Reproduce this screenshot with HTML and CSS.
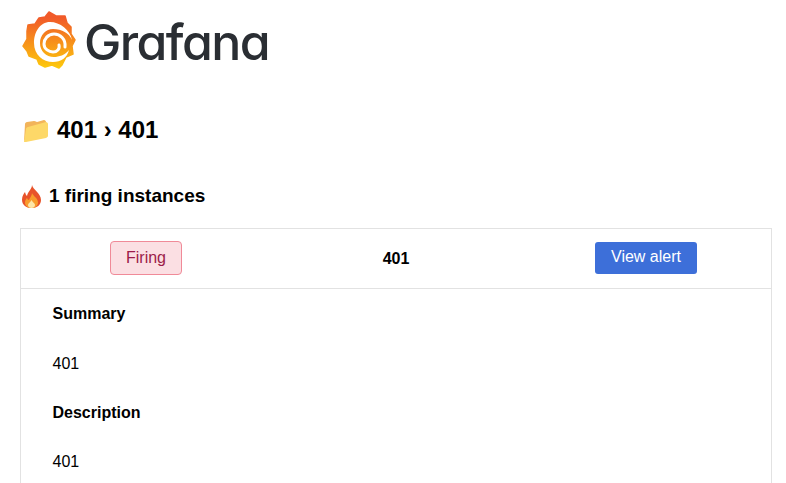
FILE: index.html
```html
<!DOCTYPE html>
<html lang="en">
<head>
<meta charset="utf-8">
<title>Grafana alert</title>
<link rel="stylesheet" href="styles.css">
</head>
<body>
<div class="page">
  <header class="brand">
    <svg class="brand-mark" viewBox="20 9 60 60" aria-hidden="true">
      <defs>
        <linearGradient id="gf" x1="0" y1="0" x2="0" y2="1">
          <stop offset="0.1" stop-color="#f15a29"/>
          <stop offset="1" stop-color="#fdc90c"/>
        </linearGradient>
      </defs>
      <path fill="url(#gf)" stroke="url(#gf)" stroke-width="1.5" stroke-linejoin="round" d="M49 11 L56 15 L65 15 L67 22 L71 26 L71 33 L75 39 L72 45 L73 53 L66 56 L62 64 L59 67 L52 64 L45 66 L39 63 L37 58 L29 55 L27 50 L23 45 L27 38 L27 30 L28 24 L35 23 L39 17 L45 16 Z"/>
      <g transform="translate(-2 0)">
        <path fill="#fff" d="M74 39 C72 29 62 21 52 21 C42 21 36 31 36 42 C36 54 45 61 55 61 C63 61 69 57 71 49 C67 54 61 56 56 56 C48 56 42 50 42 42 C42 34 48 28 55 28 C64 28 71 32 74 39 Z"/>
        <path fill="none" stroke="#fff" stroke-width="3" stroke-linecap="round" d="M67 46 C68 38 62 33 56 33 C50 33 46 38 46 43 C46 48 51 51 55 51 C59 51 62 48 61 44"/>
      </g>
    </svg>
    <span class="brand-name">Grafana</span>
  </header>

  <h1 class="title">
    <svg class="icon-folder" viewBox="20 116 30 28" aria-hidden="true">
      <path fill="#f2b45a" d="M24 142 L25 124 C25 123 26 122 27 122 L34 121 C36 121 36 122 37 122 L44 120 C45 120 46 121 46 122 L46 126 L28 131 Z"/>
      <path fill="#fdd868" d="M24 142 L26 129 C26 128 27 127 28 127 L46 122 C47 122 48 123 48 124 L48 136 C48 137 47 137 46 138 L26 142 C25 142 24 142 24 142 Z"/>
    </svg>
    <span>401 › 401</span>
  </h1>

  <h2 class="subtitle">
    <svg class="icon-fire" viewBox="0 0 21 23" aria-hidden="true">
      <path fill="#e8532a" d="M11 0 C12 5 20 8 20 15 C20 20 16 23 10.5 23 C5 23 1 20 1 14.5 C1 11 3 8.5 4 7 C4.5 9 5 10 6 11 C7 6 11 4 11 0 Z"/>
      <path fill="#f89b2c" d="M11 8 C12 11 17 13 17 17.5 C17 21 14 23 10.5 23 C7 23 4 21 4 17.5 C4 15.5 5 14 6 13 C6.5 14 7 15 8 15 C8.5 13 11 11 11 8 Z"/>
      <path fill="#fde6a8" d="M10.5 15 C11.5 17 14 18.5 14 20 C14 22 12.5 23 10.5 23 C8.5 23 7 22 7 20 C7 18.5 9.5 17 10.5 15 Z"/>
    </svg>
    <span>1 firing instances</span>
  </h2>

  <section class="card">
    <div class="card-head">
      <div class="cell"><span class="badge">Firing</span></div>
      <div class="cell"><strong class="alert-name">401</strong></div>
      <div class="cell"><a class="button" href="#">View alert</a></div>
    </div>
    <div class="card-body">
      <h3 class="label">Summary</h3>
      <p class="value">401</p>
      <h3 class="label">Description</h3>
      <p class="value">401</p>
    </div>
  </section>
</div>
</body>
</html>
```
FILE: styles.css
```css
html, body {
  margin: 0;
  height: 100%;
  overflow: hidden;
  background: #fff;
}
body {
  font-family: "Liberation Sans", Arial, sans-serif;
  font-size: 16px;
  color: #000;
}
.page {
  padding: 9px 14px 0 20px;
}
.brand {
  display: flex;
  align-items: center;
  gap: 4px;
  height: 61px;
}
.brand-mark {
  width: 60px;
  height: 60px;
  flex: none;
}
.brand-name {
  padding-top: 4px;
  font-family: "Inter", sans-serif;
  font-feature-settings: "cv11";
  font-size: 50px;
  font-weight: 500;
  line-height: 60px;
  letter-spacing: -1.6px;
  color: #2a2e33;
}
.title {
  display: flex;
  align-items: center;
  gap: 7px;
  margin: 46px 0 0;
  font-size: 24px;
  font-weight: 700;
  line-height: 28px;
}
.icon-folder {
  width: 30px;
  height: 28px;
  flex: none;
  margin: 0;
}
.subtitle {
  display: flex;
  align-items: center;
  gap: 6px;
  margin: 38px 0 0;
  font-size: 19px;
  font-weight: 700;
  line-height: 23px;
}
.icon-fire {
  width: 23px;
  height: 23px;
  flex: none;
  margin-top: 3px;
}
.card {
  margin-top: 20px;
  border: 1px solid #e2e2e2;
}
.card-head {
  display: grid;
  grid-template-columns: repeat(3, 1fr);
  height: 59px;
  border-bottom: 1px solid #e2e2e2;
}
.cell {
  display: flex;
  align-items: center;
  justify-content: center;
}
.badge {
  display: block;
  box-sizing: border-box;
  width: 72px;
  height: 34px;
  margin-bottom: 2px;
  border: 1px solid #f08a98;
  border-radius: 4px;
  background: #fbdfe3;
  color: #9c1c4a;
  text-align: center;
  line-height: 31px;
}
.alert-name {
  font-weight: 700;
}
.button {
  display: block;
  width: 102px;
  height: 32px;
  margin-bottom: 2px;
  border-radius: 3px;
  background: #3d6fd9;
  color: #fff;
  text-align: center;
  line-height: 30px;
  text-decoration: none;
}
.card-body {
  padding: 16.4px 32px 60px 31.5px;
}
.label {
  margin: 0;
  font-size: 16px;
  font-weight: 700;
  line-height: 18px;
}
.value {
  margin: 31.33px 0;
  line-height: 18px;
}
```
